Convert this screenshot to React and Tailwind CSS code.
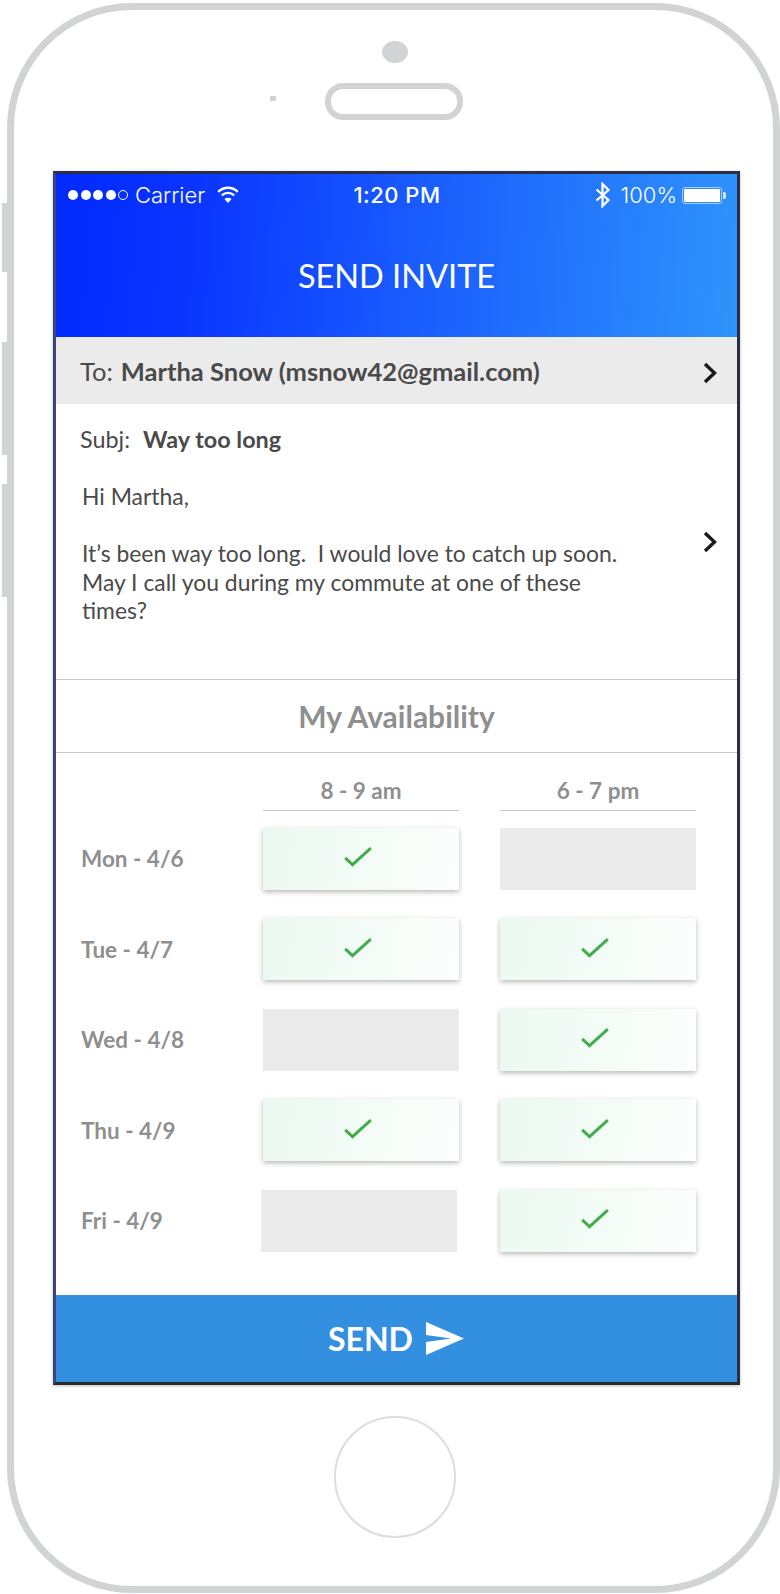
import React from "react";

const Check = () => (
  <svg width="28" height="20" viewBox="0 0 28 20" fill="none" stroke="#43ad4d" strokeWidth="3">
    <path d="M1.2 10.8 L8.5 17.6 L26.8 1.2" />
  </svg>
);

const Chevron = () => (
  <svg width="14" height="22" viewBox="0 0 14 22" fill="none" stroke="#1a1a1a" strokeWidth="3.4">
    <path d="M2 2 L11.5 11 L2 20" />
  </svg>
);

function Cell({ on, shift }) {
  if (!on) return <div className={shift ? "h-[62px] w-[196px] -translate-x-[2px] bg-[#ebebeb]" : "h-[62px] w-[196px] bg-[#ebebeb]"} />;
  return (
    <div className="flex h-[62px] w-[196px] items-center justify-center bg-[linear-gradient(100deg,#ebf9f0,#fcfefd)] pb-[3px] pr-[6px] shadow-[0_2px_5px_rgba(0,0,0,0.28)]">
      <Check />
    </div>
  );
}

const rows = [
  ["Mon - 4/6", true, false],
  ["Tue - 4/7", true, true],
  ["Wed - 4/8", false, true],
  ["Thu - 4/9", true, true],
  ["Fri - 4/9", false, true],
];

export default function App() {
  return (
    <div className="flex h-[1594px] w-[780px] items-start overflow-hidden bg-white font-['Lato',sans-serif]">
      <div className="flex w-[7px] shrink-0 flex-col pl-[2px] pt-[203px]">
        <div className="h-[69px] w-[5px] bg-[#d1d3d4]" />
        <div className="mt-[70px] h-[113px] w-[5px] bg-[#d1d3d4]" />
        <div className="mt-[29px] h-[113px] w-[5px] bg-[#d1d3d4]" />
      </div>
      <div className="mt-[3px] h-[1590px] w-[773px] shrink-0 rounded-[125px] border-[7px] border-[#d1d3d4] pl-[39px]">
        <div className="flex h-[161px] w-[687px] flex-col items-center">
          <div className="mr-[4px] mt-[31px] h-[22px] w-[26px] rounded-[50%] bg-[#d1d3d4]" />
          <div className="mt-[20px] flex items-center">
            <div className="mb-[6px] mr-[49px] h-[5px] w-[6px] bg-[#d1d3d4]" />
            <div className="mr-[61px] h-[37px] w-[138px] rounded-[18px] border-[6px] border-[#d1d3d4]" />
          </div>
        </div>
        <div className="flex h-[1214px] w-[687px] flex-col border-[3px] border-b-[#2a2a2a] border-l-[#3a4674] border-r-[#2d2d45] border-t-[#2b3048] shadow-[0_1px_3px_rgba(0,0,0,0.25)]">
          <div className="flex h-[163px] shrink-0 flex-col bg-[linear-gradient(95deg,#0029ff_0%,#0a35ff_20%,#2f94fb_100%)] text-white">
            <div className="flex h-[42px] items-center justify-between pl-[12px] pr-[11px] font-['Inter',sans-serif] text-[22px] font-light">
              <div className="flex w-[220px] items-center">
                <div className="flex items-center gap-[2.5px]">
                  <span className="h-[10px] w-[10px] rounded-full bg-white" />
                  <span className="h-[10px] w-[10px] rounded-full bg-white" />
                  <span className="h-[10px] w-[10px] rounded-full bg-white" />
                  <span className="h-[10px] w-[10px] rounded-full bg-white" />
                  <span className="h-[10px] w-[10px] rounded-full border border-white" />
                </div>
                <span className="ml-[7px]">Carrier</span>
                <svg className="mb-[2px] ml-[12px]" width="22" height="17" viewBox="0 0 22 17" fill="none" stroke="#fff" strokeWidth="2.5">
                  <path d="M1.2 5.8 C7 0.4 15 0.4 20.8 5.8" />
                  <path d="M4.8 9.4 C8.5 6.2 13.5 6.2 17.2 9.4" />
                  <path d="M11 17 L7.4 13 C9.6 11.2 12.4 11.2 14.6 13 Z" fill="#fff" stroke="none" />
                </svg>
              </div>
              <span className="font-medium tracking-[0.5px]">1:20 PM</span>
              <div className="flex w-[220px] items-center justify-end">
                <svg className="mr-[10px]" width="16" height="26" viewBox="0 0 16 26" fill="none" stroke="#fff" strokeWidth="2.3">
                  <path d="M1.5 7.5 L13.5 18 L7.5 24 L7.5 2 L13.5 8 L1.5 18.5" />
                </svg>
                <span>100%</span>
                <div className="ml-[5px] flex items-center">
                  <div className="h-[17px] w-[40px] rounded-[3px] border border-[#a9cdfb] p-[1px]">
                    <div className="h-full w-full rounded-[1px] bg-white" />
                  </div>
                  <div className="ml-[1px] h-[7px] w-[3px] rounded-r-[2px] bg-[#d5e6fd]" />
                </div>
              </div>
            </div>
            <div className="flex flex-1 items-center justify-center text-[32.5px] font-normal">
              SEND INVITE
            </div>
          </div>

          <div className="flex h-[67px] shrink-0 items-center justify-between bg-[#ebebeb] pl-[24px] pr-[20px] text-[25.5px] text-[#4a4a4a]">
            <div className="pt-[2px]">
              To:<span className="ml-[8px] font-bold">Martha Snow (msnow42@gmail.com)</span>
            </div>
            <div className="mt-[4px]">
              <Chevron />
            </div>
          </div>

          <div className="flex h-[276px] shrink-0 flex-col border-b border-[#c8c8c8]">
            <div className="flex items-center justify-between pl-[24px] pr-[20px]">
              <div className="pt-[21px] text-[23.4px] leading-[28px] text-[#4a4a4a]">
                Subj:<span className="ml-[13px] font-bold">Way too long</span>
              </div>
            </div>
            <div className="flex items-center justify-between pl-[26px] pr-[20px] pt-[29px]">
              <div className="text-[22.9px] leading-[28.5px] text-[#4a4a4a]">
                <p>Hi Martha,</p>
                <p className="mt-[28.5px]">It’s been way too long.&nbsp; I would love to catch up soon.</p>
                <p>May I call you during my commute at one of these</p>
                <p>times?</p>
              </div>
              <div className="mb-[22px]">
                <Chevron />
              </div>
            </div>
          </div>

          <div className="flex h-[73px] shrink-0 items-center justify-center border-b border-[#c8c8c8] text-[30px] font-bold text-[#8f8f8f]">
            My Availability
          </div>

          <div className="flex flex-1 flex-col pl-[26px] pt-[21px]">
            <div className="flex text-[22.5px] font-bold text-[#8f8f8f]">
              <div className="w-[181px]" />
              <div className="w-[196px] border-b border-[#c8c8c8] pb-[2px] text-center">8 - 9 am</div>
              <div className="ml-[41px] w-[196px] border-b border-[#c8c8c8] pb-[2px] text-center">6 - 7 pm</div>
            </div>
            <div className="mt-[17px] flex flex-col gap-[28.5px]">
              {rows.map(([label, a, b]) => (
                <div key={label} className="flex items-center">
                  <div className="-ml-[1px] w-[182px] pt-[1px] text-[22.5px] font-bold text-[#8f8f8f]">{label}</div>
                  <Cell on={a} shift={label.startsWith("Fri")} />
                  <div className="ml-[41px]">
                    <Cell on={b} />
                  </div>
                </div>
              ))}
            </div>
          </div>

          <div className="flex h-[87px] shrink-0 items-center justify-center gap-[13px] bg-[#338fdf] pr-[1px] text-white">
            <span className="text-[32px] font-bold leading-none">SEND</span>
            <svg width="38" height="33" viewBox="0 0 38 33">
              <path d="M0 0 L38 16.5 L0 33 L0 20 L25 16.5 L0 13 Z" fill="#fff" />
            </svg>
          </div>
        </div>
        <div className="ml-[281px] mt-[31px] h-[122px] w-[122px] rounded-[50%] border-2 border-[#dcdddf]" />
      </div>
    </div>
  );
}
